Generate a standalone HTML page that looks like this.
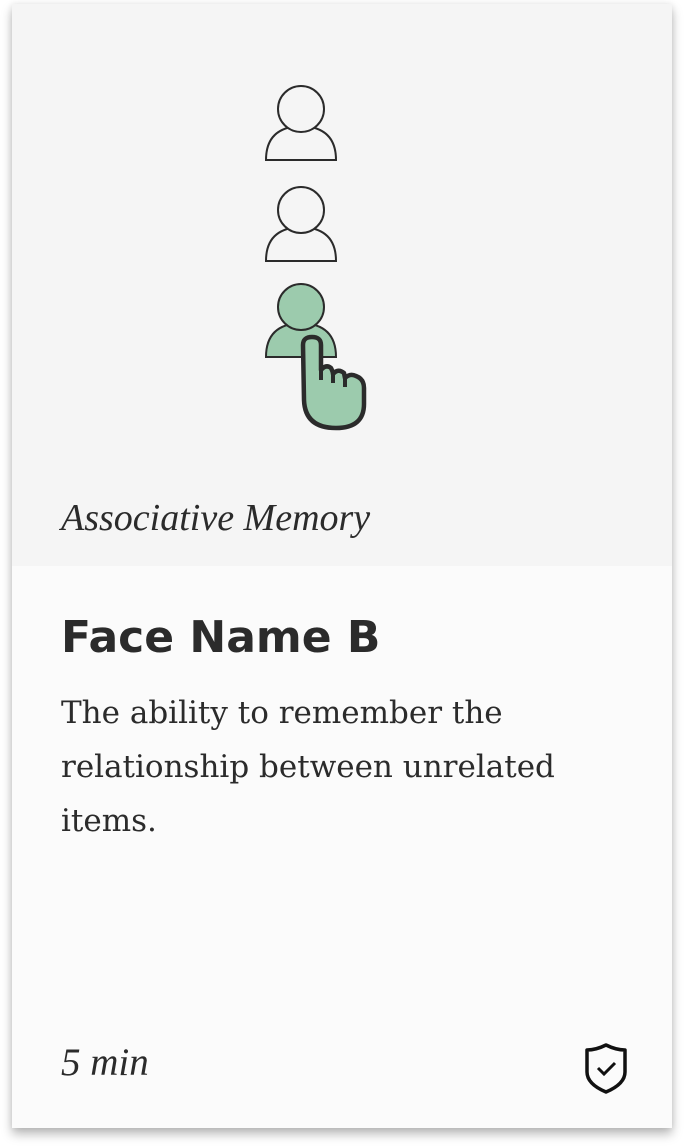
<!DOCTYPE html>
<html><head><meta charset="utf-8"><style>
html,body{margin:0;padding:0;background:#fff;width:684px;height:1148px;overflow:hidden}
.card{position:absolute;left:12px;top:4px;width:660px;height:1124px;background:#fbfbfb;box-shadow:0 6px 10px rgba(0,0,0,0.28),0 0 6px rgba(0,0,0,0.08)}
.top{position:absolute;left:0;top:0;width:660px;height:562px;background:#f5f5f5}
.cat{position:absolute;left:49px;top:492px;font-family:"Liberation Serif",serif;font-style:italic;font-size:38px;color:#2b2b2b}
h1{position:absolute;left:49px;top:608px;margin:0;font-family:"DejaVu Sans","Liberation Sans",sans-serif;font-weight:bold;font-size:44px;color:#2b2b2b}
.desc{position:absolute;left:49px;top:682px;width:620px;font-family:"DejaVu Serif",serif;font-size:31px;line-height:54px;color:#2b2b2b;white-space:nowrap}
.min{position:absolute;left:49px;top:1036px;font-family:"Liberation Serif",serif;font-style:italic;font-size:39px;color:#2b2b2b}
</style></head><body>
<div class="card">
<div class="top"></div>
<svg style="position:absolute;left:0;top:0" width="660" height="562" viewBox="12 4 660 562">
<g fill="none" stroke="#2b2b2b" stroke-width="2">
<path d="M266 160 Q266 127 301 126 Q336 127 336 160 Z"/><circle cx="301" cy="109" r="23" fill="#f5f5f5"/>
<path d="M266 261 Q266 228 301 227 Q336 228 336 261 Z"/><circle cx="301" cy="210" r="23" fill="#f5f5f5"/>
<path d="M266 357 Q266 324 301 323 Q336 324 336 357 Z" fill="#9ccbad"/><circle cx="301" cy="307" r="23" fill="#9ccbad"/>
</g>
<path d="M303 345 Q303 337 312 337 Q321 337 321 345 L321 370 Q326 364 331 368 Q333 372 333 374 Q338 368 344 373 L345 378 Q350 373 356 376 Q364 379 364 388 L364 404 Q364 428 336 428 Q305 428 304 400 Z" fill="#9ccbad" stroke="#2b2b2b" stroke-width="4.5" stroke-linejoin="round"/>
<path d="M321 370 L321 380 M333 374 L333 383 M345 378 L345 387" stroke="#2b2b2b" stroke-width="4" fill="none"/>
</svg>
<div class="cat">Associative Memory</div>
<h1>Face Name B</h1>
<div class="desc">The ability to remember the<br>relationship between unrelated<br>items.</div>
<div class="min">5 min</div>
<svg style="position:absolute;left:572px;top:1038px" width="44" height="52" viewBox="0 0 44 52">
<path d="M3 8 Q12 8 22 3 Q32 8 41 8 L41 30 Q41 42 22 50 Q3 42 3 30 Z" fill="none" stroke="#111" stroke-width="3.5" stroke-linejoin="round"/>
<path d="M14 26 L20 32 L31 21" fill="none" stroke="#111" stroke-width="3"/>
</svg>
</div>
</body></html>
